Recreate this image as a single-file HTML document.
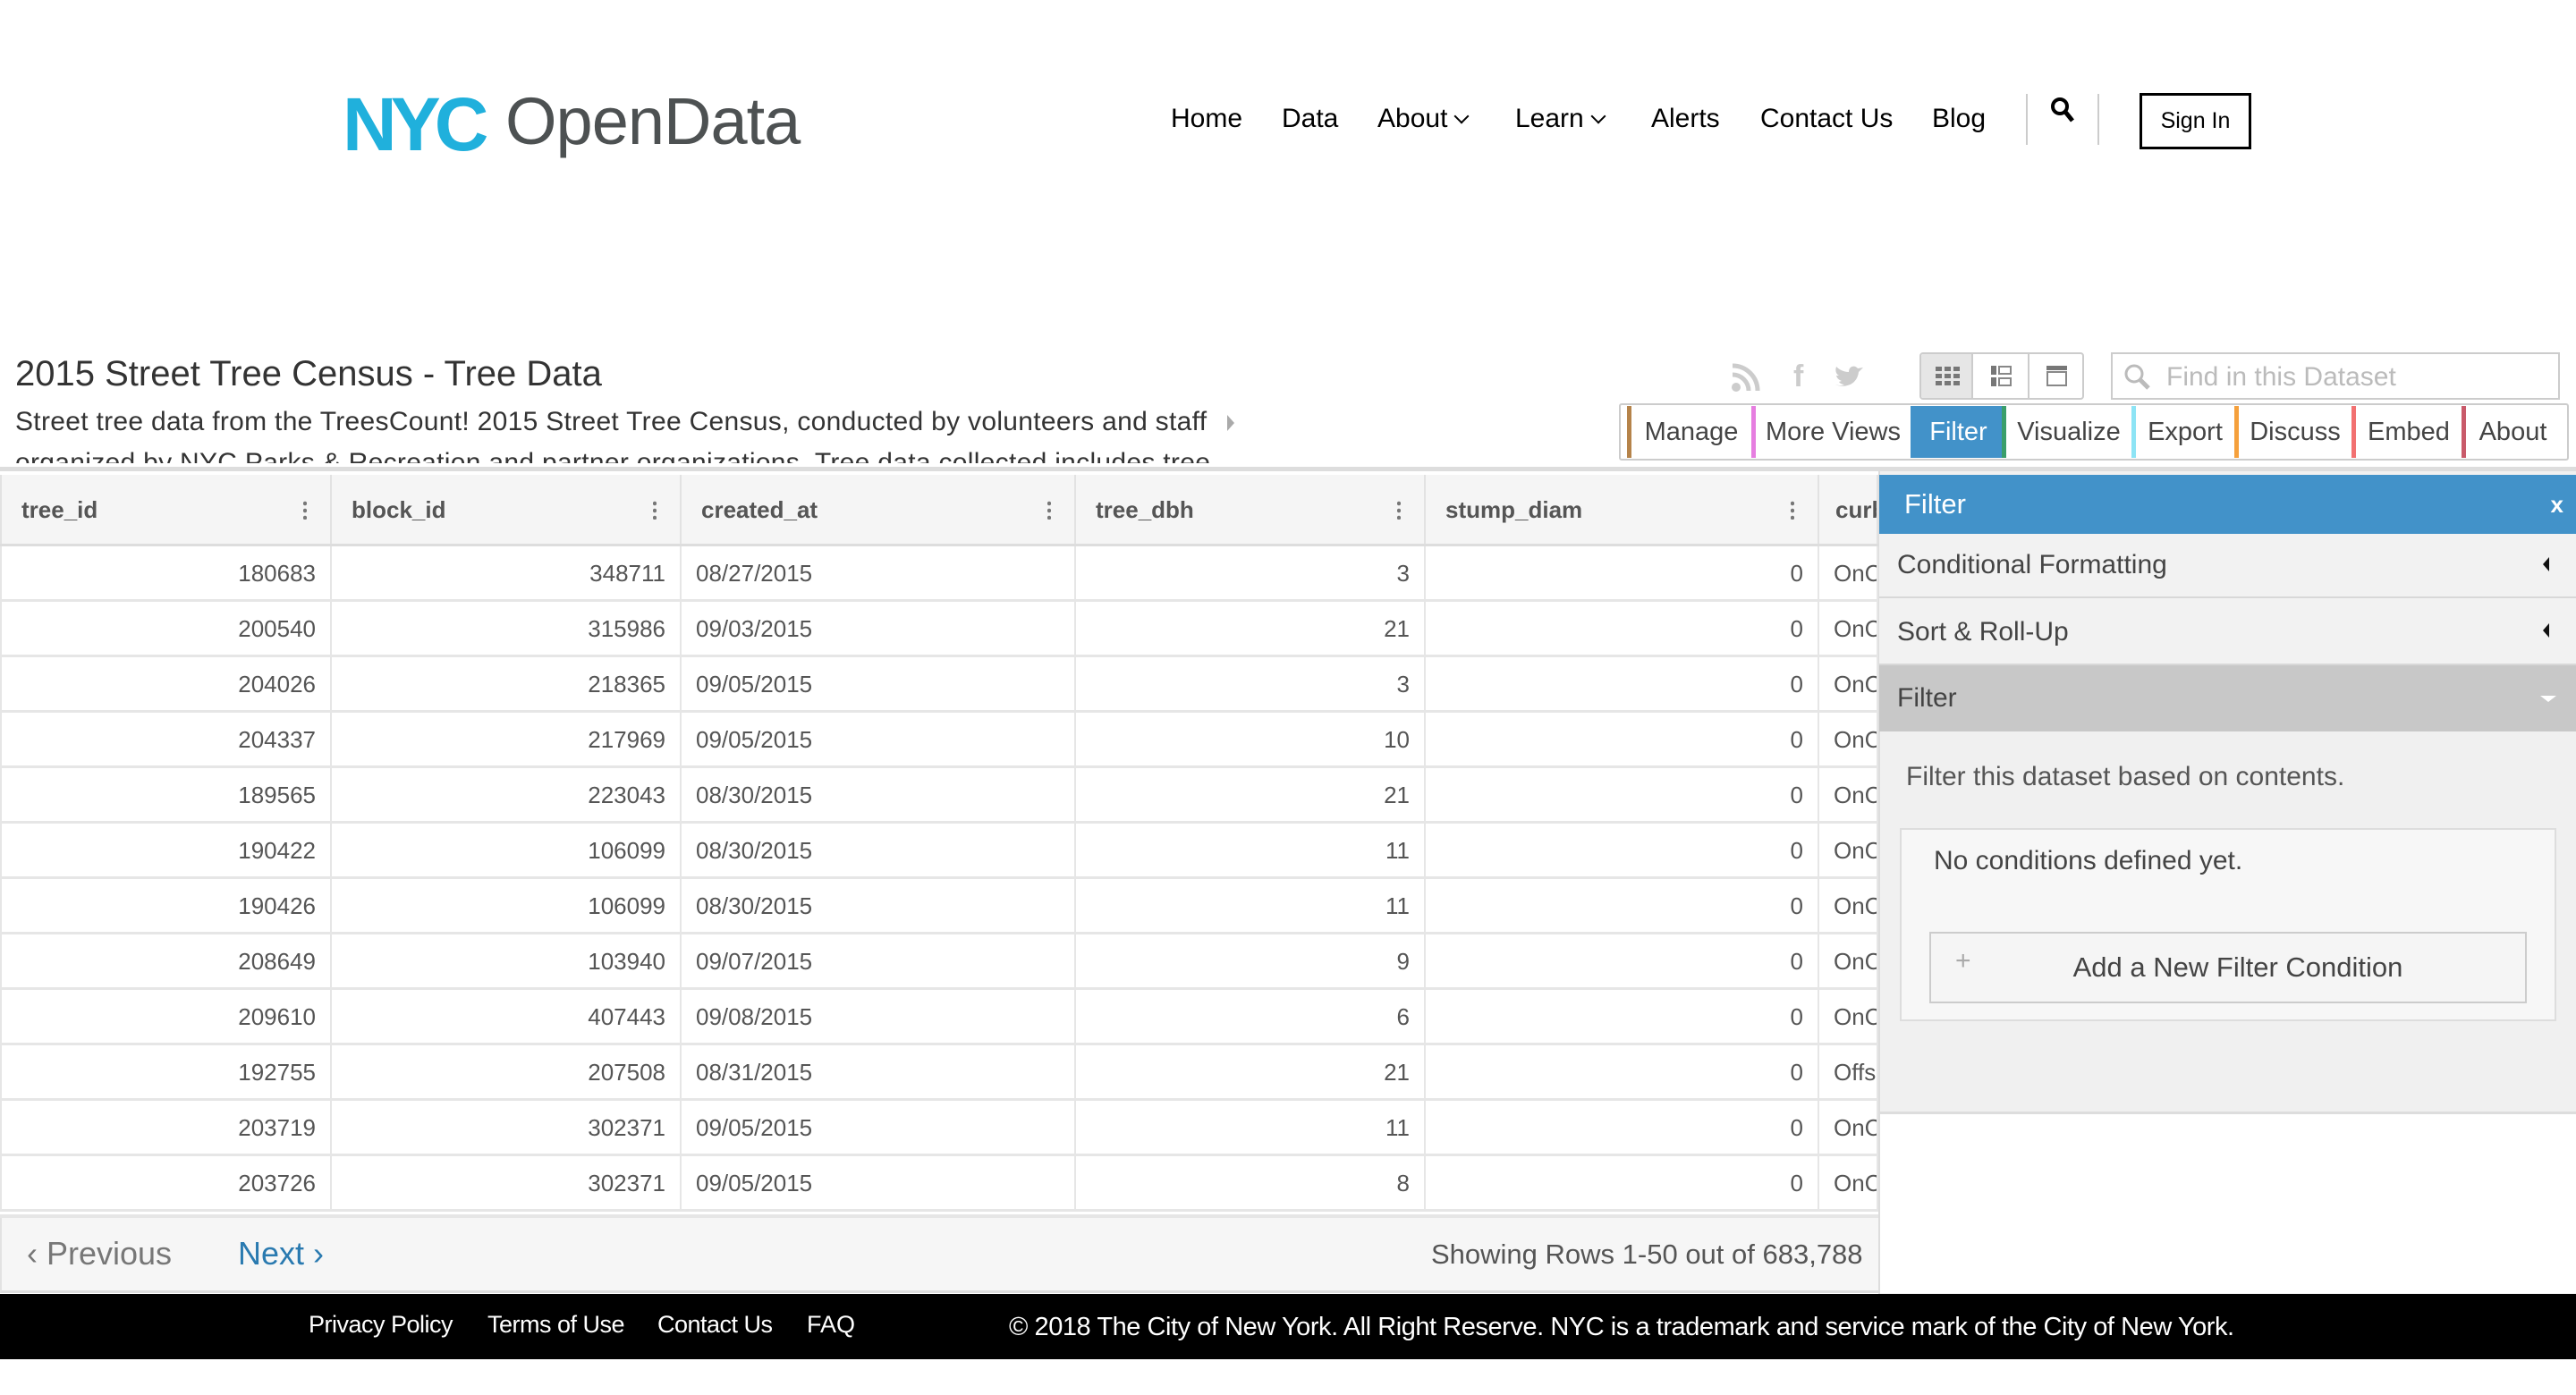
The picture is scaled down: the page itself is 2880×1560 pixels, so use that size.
<!DOCTYPE html>
<html><head><meta charset="utf-8"><style>
*{box-sizing:border-box;margin:0;padding:0}
body{width:2880px;height:1560px;background:#fff;position:relative;overflow:hidden;font-family:"Liberation Sans",sans-serif;color:#333}
.a{position:absolute}
.nav{top:116px;font-size:30px;color:#000;white-space:nowrap}
.tab{position:absolute;top:454px;height:58px;line-height:58px;font-size:29px;color:#444;text-align:center;border-left:5px solid;background:#fff}
.hd{position:absolute;top:531px;height:79px;line-height:79px;font-weight:bold;font-size:26px;color:#555;padding-left:22px;border-right:2px solid #e2e2e2;background:#f5f5f5}
.dots{position:absolute;right:26px;top:28px;width:4px;height:22px;background:radial-gradient(circle,#777 2px,transparent 2.5px) 0 0/4px 8px repeat-y}
.row{position:absolute;left:0;width:2100px;height:62px;border-bottom:3px solid #e6e6e6;font-size:26px;color:#555;line-height:60px}
.c{position:absolute;top:0;height:62px;border-right:2px solid #e6e6e6;white-space:nowrap;overflow:hidden}
.r{text-align:right;padding-right:16px}
.l{padding-left:16px}
.ph{position:absolute;left:2101px;width:779px;font-size:30px;color:#444;padding-left:20px;border-bottom:2px solid #d8d8d8}
.chev{display:inline-block;width:12px;height:12px;border-right:2px solid #000;border-bottom:2px solid #000;transform:rotate(45deg);margin-left:10px;position:relative;top:-6px}
</style></head><body>
<!-- logo -->
<div class="a" style="left:383px;top:103px;height:72px;width:170px;font:900 84px/72px 'Liberation Sans',sans-serif;color:#20b0dc;letter-spacing:-7px">NYC</div>
<div class="a" style="left:565px;top:96px;font-size:74px;line-height:80px;color:#4d5152;letter-spacing:-1px">OpenData</div>
<!-- nav -->
<div class="a nav" style="left:1309px">Home</div>
<div class="a nav" style="left:1433px">Data</div>
<div class="a nav" style="left:1540px">About<span class="chev"></span></div>
<div class="a nav" style="left:1694px">Learn<span class="chev"></span></div>
<div class="a nav" style="left:1846px">Alerts</div>
<div class="a nav" style="left:1968px">Contact Us</div>
<div class="a nav" style="left:2160px">Blog</div>
<div class="a" style="left:2265px;top:105px;width:2px;height:57px;background:#ccc"></div>
<div class="a" style="left:2345px;top:105px;width:2px;height:57px;background:#ccc"></div>
<svg class="a" style="left:2292px;top:108px" width="28" height="30"><circle cx="11" cy="11" r="8" fill="none" stroke="#000" stroke-width="4"/><path d="M17 17 L25 27" stroke="#000" stroke-width="5"/></svg>
<div class="a" style="left:2392px;top:104px;width:125px;height:63px;border:3px solid #000;font-size:25px;line-height:57px;text-align:center;color:#000">Sign In</div>
<!-- title -->
<div class="a" style="left:17px;top:396px;font-size:40px;color:#333;white-space:nowrap">2015 Street Tree Census - Tree Data</div>
<div class="a" style="left:17px;top:449px;width:1340px;height:69px;overflow:hidden;font-size:30px;line-height:46px;color:#333;white-space:nowrap;letter-spacing:0.3px">Street tree data from the TreesCount! 2015 Street Tree Census, conducted by volunteers and staff<br>organized by NYC Parks &amp; Recreation and partner organizations. Tree data collected includes tree</div>
<div class="a" style="left:1372px;top:464px;width:0;height:0;border-left:8px solid #aaa;border-top:9px solid transparent;border-bottom:9px solid transparent"></div>
<!-- social -->
<svg class="a" style="left:1935px;top:405px" width="34" height="34"><circle cx="6" cy="28" r="5" fill="#ccc"/><path d="M2 14 A18 18 0 0 1 20 32" fill="none" stroke="#ccc" stroke-width="5"/><path d="M2 4 A28 28 0 0 1 30 32" fill="none" stroke="#ccc" stroke-width="5"/></svg>
<div class="a" style="left:2005px;top:402px;font:bold 34px 'Liberation Sans';color:#ccc">f</div>
<svg class="a" style="left:2050px;top:408px" width="34" height="28"><path d="M2 22 C10 26 26 24 28 8 L33 3 L27 4 C24 0 17 1 17 8 C11 8 6 5 3 2 C1 8 4 11 6 12 L3 12 C4 16 7 17 9 18 L6 19 C8 22 12 22 12 22 C9 24 5 23 2 22Z" fill="#ccc"/></svg>
<!-- view buttons -->
<div class="a" style="left:2146px;top:394px;width:184px;height:53px;border:2px solid #ccc;border-radius:4px;background:#fff;overflow:hidden">
<div class="a" style="left:0;top:0;width:58px;height:49px;background:#e6e6e6;border-right:2px solid #ccc"></div>
<div class="a" style="left:119px;top:0;width:2px;height:49px;background:#ccc"></div>
<svg class="a" style="left:16px;top:14px" width="28" height="22"><g fill="#777"><rect x="0" y="0" width="7" height="5"/><rect x="10" y="0" width="7" height="5"/><rect x="20" y="0" width="7" height="5"/><rect x="0" y="8" width="7" height="5"/><rect x="10" y="8" width="7" height="5"/><rect x="20" y="8" width="7" height="5"/><rect x="0" y="16" width="7" height="5"/><rect x="10" y="16" width="7" height="5"/><rect x="20" y="16" width="7" height="5"/></g></svg>
<svg class="a" style="left:78px;top:13px" width="24" height="24"><rect x="0" y="0" width="6" height="10" fill="#777"/><rect x="0" y="13" width="6" height="10" fill="#777"/><rect x="9" y="1" width="13" height="8" fill="none" stroke="#888" stroke-width="2"/><rect x="9" y="14" width="13" height="8" fill="none" stroke="#888" stroke-width="2"/></svg>
<svg class="a" style="left:140px;top:13px" width="24" height="24"><rect x="0" y="0" width="23" height="5" fill="#777"/><rect x="1" y="7" width="21" height="15" fill="none" stroke="#888" stroke-width="2"/></svg>
</div>
<!-- search -->
<div class="a" style="left:2360px;top:394px;width:502px;height:53px;border:2px solid #ccc;background:#fff">
<svg class="a" style="left:12px;top:10px" width="32" height="32"><circle cx="12" cy="12" r="9" fill="none" stroke="#bbb" stroke-width="3"/><path d="M19 19 L28 28" stroke="#bbb" stroke-width="5"/></svg>
<div class="a" style="left:60px;top:9px;font-size:30px;color:#bbb;white-space:nowrap">Find in this Dataset</div>
</div>
<!-- tabs -->
<div class="a" style="left:1810px;top:451px;width:1062px;height:64px;border:2px solid #ccc;border-radius:3px;background:#fff"></div>
<div class="tab" style="left:1819px;width:139px;border-color:#b5834a">Manage</div>
<div class="tab" style="left:1958px;width:178px;border-color:#e67ee0">More Views</div>
<div class="tab" style="left:2136px;width:102px;border-color:#4292c9;background:#4292c9;color:#fff">Filter</div>
<div class="tab" style="left:2238px;width:145px;border-color:#3a9e6a">Visualize</div>
<div class="tab" style="left:2383px;width:115px;border-color:#8de4f5">Export</div>
<div class="tab" style="left:2498px;width:131px;border-color:#f5a03c">Discuss</div>
<div class="tab" style="left:2629px;width:123px;border-color:#f27171">Embed</div>
<div class="tab" style="left:2752px;width:110px;border-color:#c95a6a">About</div>
<!-- divider -->
<div class="a" style="left:0;top:522px;width:2880px;height:5px;background:#ddd"></div>
<!-- table -->
<div class="a" style="left:0;top:527px;width:2100px;height:4px;background:#fff"></div>
<div class="hd" style="left:0;width:371px;border-left:2px solid #e2e2e2">tree_id<div class="dots"></div></div>
<div class="hd" style="left:371px;width:391px">block_id<div class="dots"></div></div>
<div class="hd" style="left:762px;width:441px">created_at<div class="dots"></div></div>
<div class="hd" style="left:1203px;width:391px">tree_dbh<div class="dots"></div></div>
<div class="hd" style="left:1594px;width:440px">stump_diam<div class="dots"></div></div>
<div class="hd" style="left:2034px;width:66px;overflow:hidden;padding-left:18px">curb</div>
<div class="a" style="left:0;top:608px;width:2100px;height:3px;background:#ddd"></div>
<div id="rows"></div>
<script>
var d=[["180683","348711","08/27/2015","3","OnC"],["200540","315986","09/03/2015","21","OnC"],["204026","218365","09/05/2015","3","OnC"],["204337","217969","09/05/2015","10","OnC"],["189565","223043","08/30/2015","21","OnC"],["190422","106099","08/30/2015","11","OnC"],["190426","106099","08/30/2015","11","OnC"],["208649","103940","09/07/2015","9","OnC"],["209610","407443","09/08/2015","6","OnC"],["192755","207508","08/31/2015","21","Offs"],["203719","302371","09/05/2015","11","OnC"],["203726","302371","09/05/2015","8","OnC"]];
var h="";d.forEach(function(r,i){var t=611+i*62;h+='<div class="row" style="top:'+t+'px">'+
'<div class="c r" style="left:0;width:371px;border-left:2px solid #e6e6e6">'+r[0]+'</div>'+
'<div class="c r" style="left:371px;width:391px">'+r[1]+'</div>'+
'<div class="c l" style="left:762px;width:441px">'+r[2]+'</div>'+
'<div class="c r" style="left:1203px;width:391px">'+r[3]+'</div>'+
'<div class="c r" style="left:1594px;width:440px">0</div>'+
'<div class="c l" style="left:2034px;width:66px">'+r[4]+'</div></div>';});
document.getElementById("rows").innerHTML=h;
</script>
<!-- pagination -->
<div class="a" style="left:0;top:1358px;width:2100px;height:4px;background:#e6e6e6"></div>
<div class="a" style="left:0;top:1362px;width:2100px;height:84px;background:#f6f6f6;border-bottom:3px solid #ddd;border-left:2px solid #e2e2e2"></div>
<div class="a" style="left:30px;top:1381px;font-size:36px;color:#777;white-space:nowrap">&#8249; Previous</div>
<div class="a" style="left:266px;top:1381px;font-size:36px;color:#2a7ab0;white-space:nowrap">Next &#8250;</div>
<div class="a" style="left:1600px;top:1385px;width:482px;text-align:right;font-size:31px;color:#555;white-space:nowrap">Showing Rows 1-50 out of 683,788</div>
<!-- filter panel -->
<div class="a" style="left:2100px;top:527px;width:780px;height:920px;background:#f0f0f0;border-left:2px solid #ddd"></div>
<div class="a" style="left:2101px;top:531px;width:779px;height:66px;background:#4292c9;color:#fff;font-size:31px;line-height:66px;padding-left:28px">Filter<span style="position:absolute;right:14px;top:0;font-weight:bold;font-size:26px">x</span></div>
<div class="ph" style="top:597px;height:72px;line-height:70px;background:#f2f2f2">Conditional Formatting<span style="position:absolute;right:30px;top:26px;border-right:7px solid #111;border-top:8px solid transparent;border-bottom:8px solid transparent"></span></div>
<div class="ph" style="top:669px;height:75px;line-height:75px;background:#f2f2f2">Sort &amp; Roll-Up<span style="position:absolute;right:30px;top:28px;border-right:7px solid #111;border-top:8px solid transparent;border-bottom:8px solid transparent"></span></div>
<div class="ph" style="top:744px;height:74px;line-height:74px;background:#c8c8c8;border:none">Filter<span style="position:absolute;right:22px;top:34px;border-top:7px solid #fff;border-left:9px solid transparent;border-right:9px solid transparent"></span></div>
<div class="a" style="left:2131px;top:852px;font-size:30px;color:#555;white-space:nowrap">Filter this dataset based on contents.</div>
<div class="a" style="left:2124px;top:926px;width:734px;height:216px;background:#f7f7f7;border:2px solid #ddd"></div>
<div class="a" style="left:2162px;top:946px;font-size:30px;color:#444;white-space:nowrap">No conditions defined yet.</div>
<div class="a" style="left:2157px;top:1042px;width:668px;height:80px;border:2px solid #ccc;background:#f5f5f5"></div>
<div class="a" style="left:2186px;top:1058px;font-size:30px;color:#aaa">+</div>
<div class="a" style="left:2157px;top:1064px;width:690px;text-align:center;font-size:31px;color:#444;white-space:nowrap">Add a New Filter Condition</div>
<div class="a" style="left:2100px;top:1243px;width:780px;height:3px;background:#ddd"></div>
<div class="a" style="left:2102px;top:1246px;width:778px;height:200px;background:#fff"></div>
<!-- footer -->
<div class="a" style="left:0;top:1447px;width:2880px;height:73px;background:#000"></div>
<div class="a" style="left:345px;top:1466px;font-size:27px;color:#fff;white-space:nowrap;letter-spacing:-0.5px">Privacy Policy</div>
<div class="a" style="left:545px;top:1466px;font-size:27px;color:#fff;white-space:nowrap;letter-spacing:-0.5px">Terms of Use</div>
<div class="a" style="left:735px;top:1466px;font-size:27px;color:#fff;white-space:nowrap;letter-spacing:-0.5px">Contact Us</div>
<div class="a" style="left:902px;top:1466px;font-size:27px;color:#fff;white-space:nowrap">FAQ</div>
<div class="a" style="left:1128px;top:1468px;font-size:29px;color:#fff;white-space:nowrap;letter-spacing:-0.45px">© 2018 The City of New York. All Right Reserve. NYC is a trademark and service mark of the City of New York.</div>
</body></html>
